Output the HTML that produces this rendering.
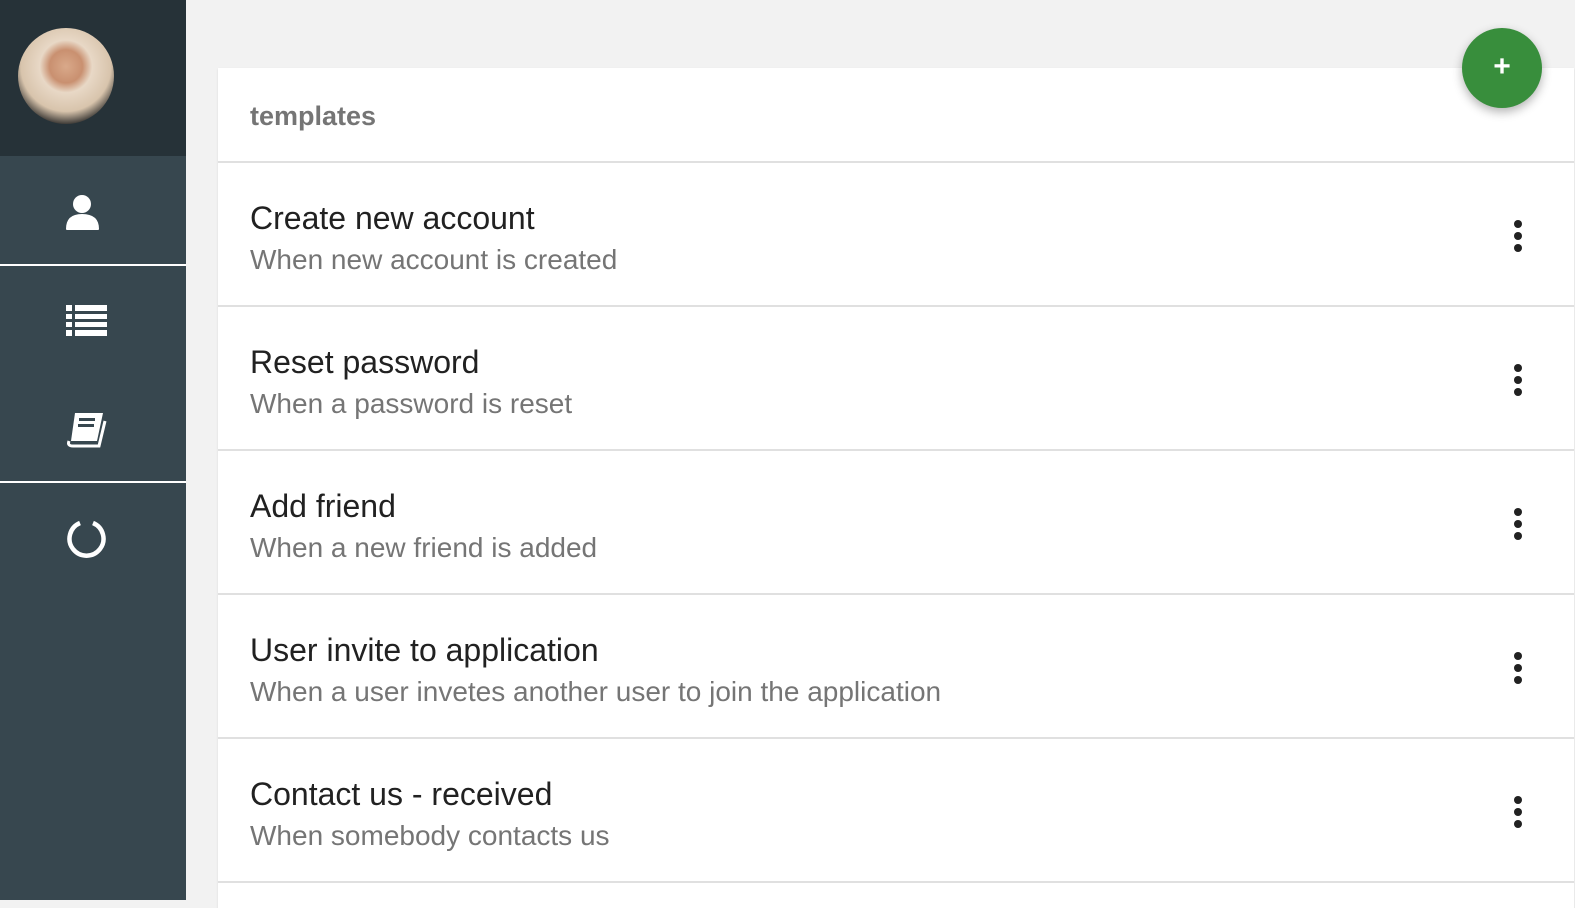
<!DOCTYPE html>
<html><head><style>
body{margin:0;width:1575px;height:900px;background:#f2f2f2;font-family:"Liberation Sans",sans-serif;overflow:hidden;position:relative}
.side{position:absolute;left:0;top:0;width:186px;height:900px;background:#37474f}
.top{height:156px;background:#263238;position:relative}
.av{position:absolute;left:18px;top:28px;width:96px;height:96px;border-radius:50%;background:radial-gradient(circle at 50% 40%,#d9a98a 0,#c99070 22%,#e8d8c6 35%,#d8c4ac 60%,#222 80%)}
.hr{position:absolute;left:0;width:186px;height:2px;background:#fff}
.ic{position:absolute}
.card{position:absolute;left:218px;top:68px;width:1356px;height:840px;background:#fff;box-shadow:0 1px 2px rgba(0,0,0,.1)}
.hd{height:93px;border-bottom:2px solid #e0e0e0;font-size:27px;font-weight:bold;color:#757575;padding-left:32px;line-height:96px}
.row{height:142px;border-bottom:2px solid #e0e0e0;position:relative;padding-left:32px}
.t{position:absolute;top:37px;font-size:32px;color:#212121}
.s{position:absolute;top:81px;font-size:28px;color:#757575}
.dots{position:absolute;right:52px;top:57px;width:8px}
.dots i{display:block;width:8px;height:8px;border-radius:50%;background:#212121;margin-bottom:4px}
.fab{position:absolute;left:1462px;top:28px;width:80px;height:80px;border-radius:50%;background:#388e3c;box-shadow:0 4px 10px rgba(0,0,0,.3);color:#fff;font-size:30px;font-weight:bold;text-align:center;line-height:78px}
</style></head><body>
<div class="side">
<div class="top"><div class="av"></div></div>
<div class="hr" style="top:264px"></div>
<div class="hr" style="top:481px"></div>
<svg class="ic" style="left:65px;top:193px" width="36" height="38" viewBox="0 0 36 38"><circle cx="17" cy="11" r="9" fill="#fff"/><path d="M2 36 Q2 22 17 22 Q33 22 33 36 Z" fill="#fff" stroke="#fff" stroke-linejoin="round" stroke-width="2"/></svg>
<svg class="ic" style="left:66px;top:305px" width="42" height="32"><g fill="#fff"><rect x="0" y="0" width="6" height="6"/><rect x="9" y="0" width="32" height="6"/><rect x="0" y="9" width="6" height="5"/><rect x="9" y="9" width="32" height="5"/><rect x="0" y="17" width="6" height="5"/><rect x="9" y="17" width="32" height="5"/><rect x="0" y="25" width="6" height="6"/><rect x="9" y="25" width="32" height="6"/></g></svg>
<svg class="ic" style="left:65px;top:411px" width="42" height="38"><path d="M10 2 H38 L32 30 H6 Z" fill="#fff"/><path d="M4 30 Q2 35 8 35 H34 L40 10" fill="none" stroke="#fff" stroke-width="3"/><rect x="14" y="7" width="16" height="3" fill="#37474f"/><rect x="13" y="13" width="16" height="3" fill="#37474f"/></svg>
<svg class="ic" style="left:66px;top:518px" width="42" height="42"><path d="M14 5 A17 17 0 1 0 27 5" fill="none" stroke="#fff" stroke-width="4.5"/></svg>
</div>
<div class="card">
<div class="hd">templates</div>
<div class="row"><div class="t">Create new account</div><div class="s">When new account is created</div><div class="dots"><i></i><i></i><i></i></div></div>
<div class="row"><div class="t">Reset password</div><div class="s">When a password is reset</div><div class="dots"><i></i><i></i><i></i></div></div>
<div class="row"><div class="t">Add friend</div><div class="s">When a new friend is added</div><div class="dots"><i></i><i></i><i></i></div></div>
<div class="row"><div class="t">User invite to application</div><div class="s">When a user invetes another user to join the application</div><div class="dots"><i></i><i></i><i></i></div></div>
<div class="row"><div class="t">Contact us - received</div><div class="s">When somebody contacts us</div><div class="dots"><i></i><i></i><i></i></div></div>
</div>
<div class="fab">+</div>
</body></html>
